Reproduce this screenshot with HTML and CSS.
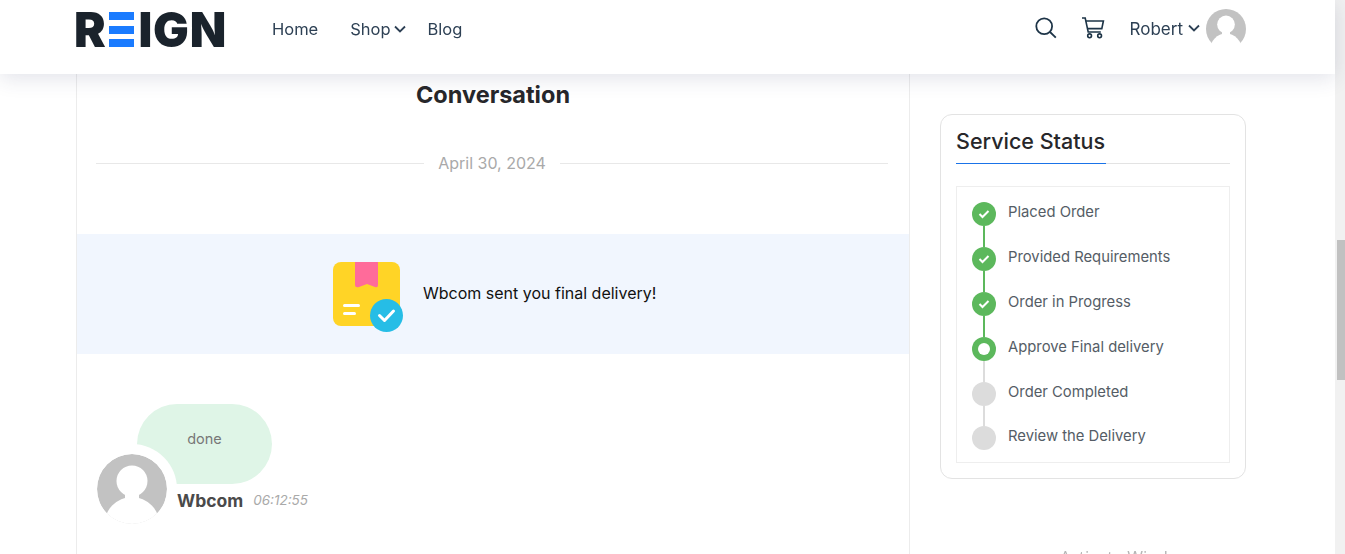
FILE: index.html
```html
<!DOCTYPE html>
<html lang="en">
<head>
    <meta charset="UTF-8">
    <meta name="viewport" content="width=device-width, initial-scale=1.0">
    <title>Conversation</title>
    <link rel="stylesheet" href="styles.css">
</head>
<body>

<div class="page">
    <header class="site-header">
        <a class="logo" href="#">R<span class="logo-e"><i></i><i></i><i></i></span>IGN</a>
        <nav class="main-nav">
            <a class="nav-home" href="#">Home</a>
            <a class="nav-shop" href="#">Shop
                <svg class="chevron" viewBox="0 0 12 8"><path d="M1 1.5l5 5 5-5"/></svg>
            </a>
            <a href="#">Blog</a>
        </nav>
        <div class="header-right">
            <svg class="icon-search" viewBox="0 0 22 22"><circle cx="9.2" cy="9.2" r="7.9"/><path d="M15 15l5.8 5.6"/></svg>
            <svg class="icon-cart" viewBox="0 0 24 22"><path d="M1 1h3.2l3 14h12.6"/><path d="M4.8 4h17.6l-1.6 7.6H6.4"/><circle cx="8.6" cy="18.8" r="1.9"/><circle cx="18.6" cy="18.8" r="1.9"/></svg>
            <a class="user-name" href="#">Robert
                <svg class="chevron" viewBox="0 0 12 8"><path d="M1 1.5l5 5 5-5"/></svg>
            </a>
            <svg class="avatar-small" viewBox="0 0 70 70"><circle cx="35" cy="35" r="35" fill="#c2c2c2"/><circle cx="35" cy="27" r="15.5" fill="#fff"/><rect x="28" y="38" width="14" height="10" fill="#fff"/><ellipse cx="35" cy="72" rx="28" ry="29" fill="#fff"/></svg>
        </div>
    </header>

    <main class="content">
        <section class="conversation">
            <h2 class="conversation-title">Conversation</h2>
            <div class="date-row"><span>April 30, 2024</span></div>

            <div class="delivery-band">
                <svg class="delivery-icon" viewBox="0 0 70 70">
                    <rect width="67" height="64" rx="8" fill="#ffd426"/>
                    <path d="M22 0h23v23q0 3-3 2l-8-3-8 3q-4 1-4-2z" fill="#ff6b9a"/>
                    <rect x="10" y="42" width="17" height="3" rx="1.5" fill="#fff"/>
                    <rect x="10" y="50" width="13" height="3" rx="1.5" fill="#fff"/>
                    <circle cx="53.5" cy="53.5" r="16.5" fill="#26bde6"/>
                    <path d="M46.5 53.5l5 5 9-9.5" fill="none" stroke="#fff" stroke-width="3" stroke-linecap="round" stroke-linejoin="round"/>
                </svg>
                <p>Wbcom sent you final delivery!</p>
            </div>

            <div class="message">
                <div class="bubble">done</div>
                <div class="message-foot">
                    <svg class="avatar-large" viewBox="0 0 70 70"><circle cx="35" cy="35" r="35" fill="#c2c2c2"/><circle cx="35" cy="27" r="15.5" fill="#fff"/><rect x="28" y="38" width="14" height="10" fill="#fff"/><ellipse cx="35" cy="72" rx="28" ry="29" fill="#fff"/></svg>
                    <strong>Wbcom</strong>
                    <em>06:12:55</em>
                </div>
            </div>
        </section>

        <aside class="sidebar">
            <div class="status-card">
                <h3 class="status-title"><span>Service Status</span></h3>
                <ul class="status-list">
                    <li class="step done">
                        <div class="marker"><span class="dot"><svg viewBox="0 0 12 10"><path d="M1.5 5l3 3 6-6"/></svg></span><span class="line"></span></div>
                        <span class="step-label">Placed Order</span>
                    </li>
                    <li class="step done">
                        <div class="marker"><span class="dot"><svg viewBox="0 0 12 10"><path d="M1.5 5l3 3 6-6"/></svg></span><span class="line"></span></div>
                        <span class="step-label">Provided Requirements</span>
                    </li>
                    <li class="step done">
                        <div class="marker"><span class="dot"><svg viewBox="0 0 12 10"><path d="M1.5 5l3 3 6-6"/></svg></span><span class="line"></span></div>
                        <span class="step-label">Order in Progress</span>
                    </li>
                    <li class="step current">
                        <div class="marker"><span class="dot"></span><span class="line"></span></div>
                        <span class="step-label">Approve Final delivery</span>
                    </li>
                    <li class="step before-last">
                        <div class="marker"><span class="dot"></span><span class="line"></span></div>
                        <span class="step-label">Order Completed</span>
                    </li>
                    <li class="step last">
                        <div class="marker"><span class="dot"></span></div>
                        <span class="step-label">Review the Delivery</span>
                    </li>
                </ul>
            </div>
        </aside>
    </main>
</div>

<div class="scrollbar"><div class="scrollbar-thumb"></div></div>
<div class="watermark">Activate Windows</div>

</body>
</html>
```

FILE: styles.css
```css
* {
    box-sizing: border-box;
}
html, body {
    height: 100%;
    overflow: hidden;
}
body {
    margin: 0;
    background-color: #fff;
    font-family: Inter, "Liberation Sans", sans-serif;
    color: #4a4a4a;
}
a {
    color: inherit;
    text-decoration: none;
}
.page {
    width: 1335px;
}

/* header */
.site-header {
    position: relative;
    z-index: 2;
    display: flex;
    align-items: flex-start;
    height: 74px;
    padding: 0 89px 0 74px;
    background-color: #fff;
    box-shadow: 0 4px 20px rgba(40, 50, 100, 0.14);
}
.logo {
    display: flex;
    align-items: center;
    width: 153px;
    height: 59px;
    font-family: Inter, sans-serif;
    font-size: 47.5px;
    font-weight: 900;
    letter-spacing: 0.8px;
    line-height: 59px;
    color: #1a232c;
}
.logo-e {
    display: flex;
    flex-direction: column;
    justify-content: space-between;
    width: 27px;
    height: 35px;
    margin: 0 4px 0 2px;
}
.logo-e i {
    display: block;
    height: 8px;
    background-color: #1a7bff;
}
.main-nav {
    display: flex;
    align-items: center;
    height: 58px;
    margin-left: 45px;
    font-size: 16.5px;
    color: #2d4054;
}
.main-nav a {
    display: flex;
    align-items: center;
}
.nav-home {
    margin-right: 32px;
}
.nav-shop {
    margin-right: 22px;
}
.chevron {
    width: 12px;
    height: 8px;
    margin-left: 3px;
    fill: none;
    stroke: #2d4054;
    stroke-width: 1.8;
}
.header-right {
    display: flex;
    align-items: center;
    height: 58px;
    margin-left: auto;
    color: #2d4054;
}
.icon-search {
    width: 22px;
    height: 22px;
    margin-right: 24px;
    margin-top: -3px;
    fill: none;
    stroke: #1d3447;
    stroke-width: 1.8;
}
.icon-cart {
    width: 24px;
    height: 22px;
    margin-right: 25px;
    margin-top: -3px;
    fill: none;
    stroke: #1d3447;
    stroke-width: 1.6;
}
.user-name {
    display: flex;
    align-items: center;
    font-size: 17px;
}
.user-name .chevron {
    margin-left: 5px;
    margin-top: -3px;
}
.avatar-small {
    width: 40px;
    height: 40px;
    margin-left: 6px;
}

/* main layout */
.content {
    display: flex;
    align-items: flex-start;
    padding-left: 76px;
}
.conversation {
    width: 834px;
    height: 480px;
    border-left: 1px solid #ececec;
    border-right: 1px solid #ececec;
}
.conversation-title {
    margin: 0;
    padding-top: 7px;
    font-size: 23.5px;
    font-weight: 700;
    line-height: 28px;
    text-align: center;
    color: #27272a;
}
.date-row {
    display: flex;
    align-items: center;
    gap: 14px;
    margin: 42px 21px 0 19px;
    font-size: 16px;
    line-height: 24px;
    color: #a9a9a9;
}
.date-row::before, .date-row::after {
    content: "";
    flex: 1;
    height: 1px;
    background-color: #e8e8e8;
}
.delivery-band {
    display: flex;
    align-items: center;
    height: 120px;
    margin-top: 59px;
    padding-left: 256px;
    background-color: #f1f6fe;
}
.delivery-icon {
    width: 70px;
    height: 70px;
    margin-top: 6px;
}
.delivery-band p {
    margin: 0 0 2px 20px;
    font-size: 16px;
    color: #111;
}
.message {
    margin-top: 50px;
    padding-left: 10px;
}
.bubble {
    display: flex;
    align-items: center;
    justify-content: center;
    width: 135px;
    height: 80px;
    margin-left: 50px;
    padding-bottom: 11px;
    border-radius: 40px;
    background-color: #dff5e7;
    font-size: 14.5px;
    color: #777;
}
.message-foot {
    display: flex;
    align-items: center;
    height: 90px;
    margin-top: -40px;
    font-size: 17.5px;
}
.avatar-large {
    flex: none;
    width: 90px;
    height: 90px;
    padding: 10px;
    border-radius: 50%;
    background-color: #fff;
}
.message-foot strong {
    margin-top: 22px;
    font-weight: 700;
    color: #4a4a4a;
}
.message-foot em {
    margin: 22px 0 0 10px;
    font-size: 13.5px;
    color: #a9a9a9;
}

/* sidebar */
.sidebar {
    width: 306px;
    margin: 40px 0 0 30px;
}
.status-card {
    height: 365px;
    padding: 0 15px;
    border: 1px solid #e3e3e3;
    border-radius: 12px;
}
.status-title {
    margin: 0;
    height: 49px;
    border-bottom: 1px solid #e3e3e3;
    font-size: 21.5px;
    font-weight: 500;
    line-height: 53px;
    color: #27272a;
}
.status-title span {
    display: inline-block;
    width: 150px;
    height: 49px;
    border-bottom: 1px solid #1a73e8;
    white-space: nowrap;
}
.status-list {
    height: 277px;
    margin: 22px 0 0;
    padding: 15px 15px 0;
    border: 1px solid #eee;
    list-style: none;
}
.step {
    display: flex;
    height: 45px;
    font-size: 14.8px;
    color: #555d66;
}
.step.before-last {
    height: 44px;
}
.step.last {
    height: 24px;
}
.marker {
    display: flex;
    flex-direction: column;
    align-items: center;
    width: 24px;
    margin-right: 12px;
}
.dot {
    display: flex;
    align-items: center;
    justify-content: center;
    flex: none;
    width: 24px;
    height: 24px;
    border-radius: 50%;
    background-color: #dcdcdc;
}
.dot svg {
    width: 12px;
    height: 10px;
    fill: none;
    stroke: #fff;
    stroke-width: 2;
}
.line {
    width: 2px;
    height: 21px;
    background-color: #dcdcdc;
}
.step-label {
    line-height: 20px;
}
.done .dot, .current .dot {
    background-color: #5cb85c;
}
.done .line {
    background-color: #5cb85c;
}
.current .dot::before {
    content: "";
    width: 12px;
    height: 12px;
    border-radius: 50%;
    background-color: #fff;
}

/* browser scrollbar and os watermark sit over the page */
.scrollbar {
    position: fixed;
    top: 0;
    right: 0;
    width: 10px;
    height: 100%;
    background-color: #f1f1f1;
}
.scrollbar-thumb {
    width: 8px;
    height: 140px;
    margin: 240px 0 0 2px;
    background-color: #c1c1c1;
}
.watermark {
    position: fixed;
    top: 545px;
    left: 1060px;
    font-family: "Open Sans", sans-serif;
    font-size: 17px;
    line-height: 24px;
    color: #b5b5b5;
}
```
